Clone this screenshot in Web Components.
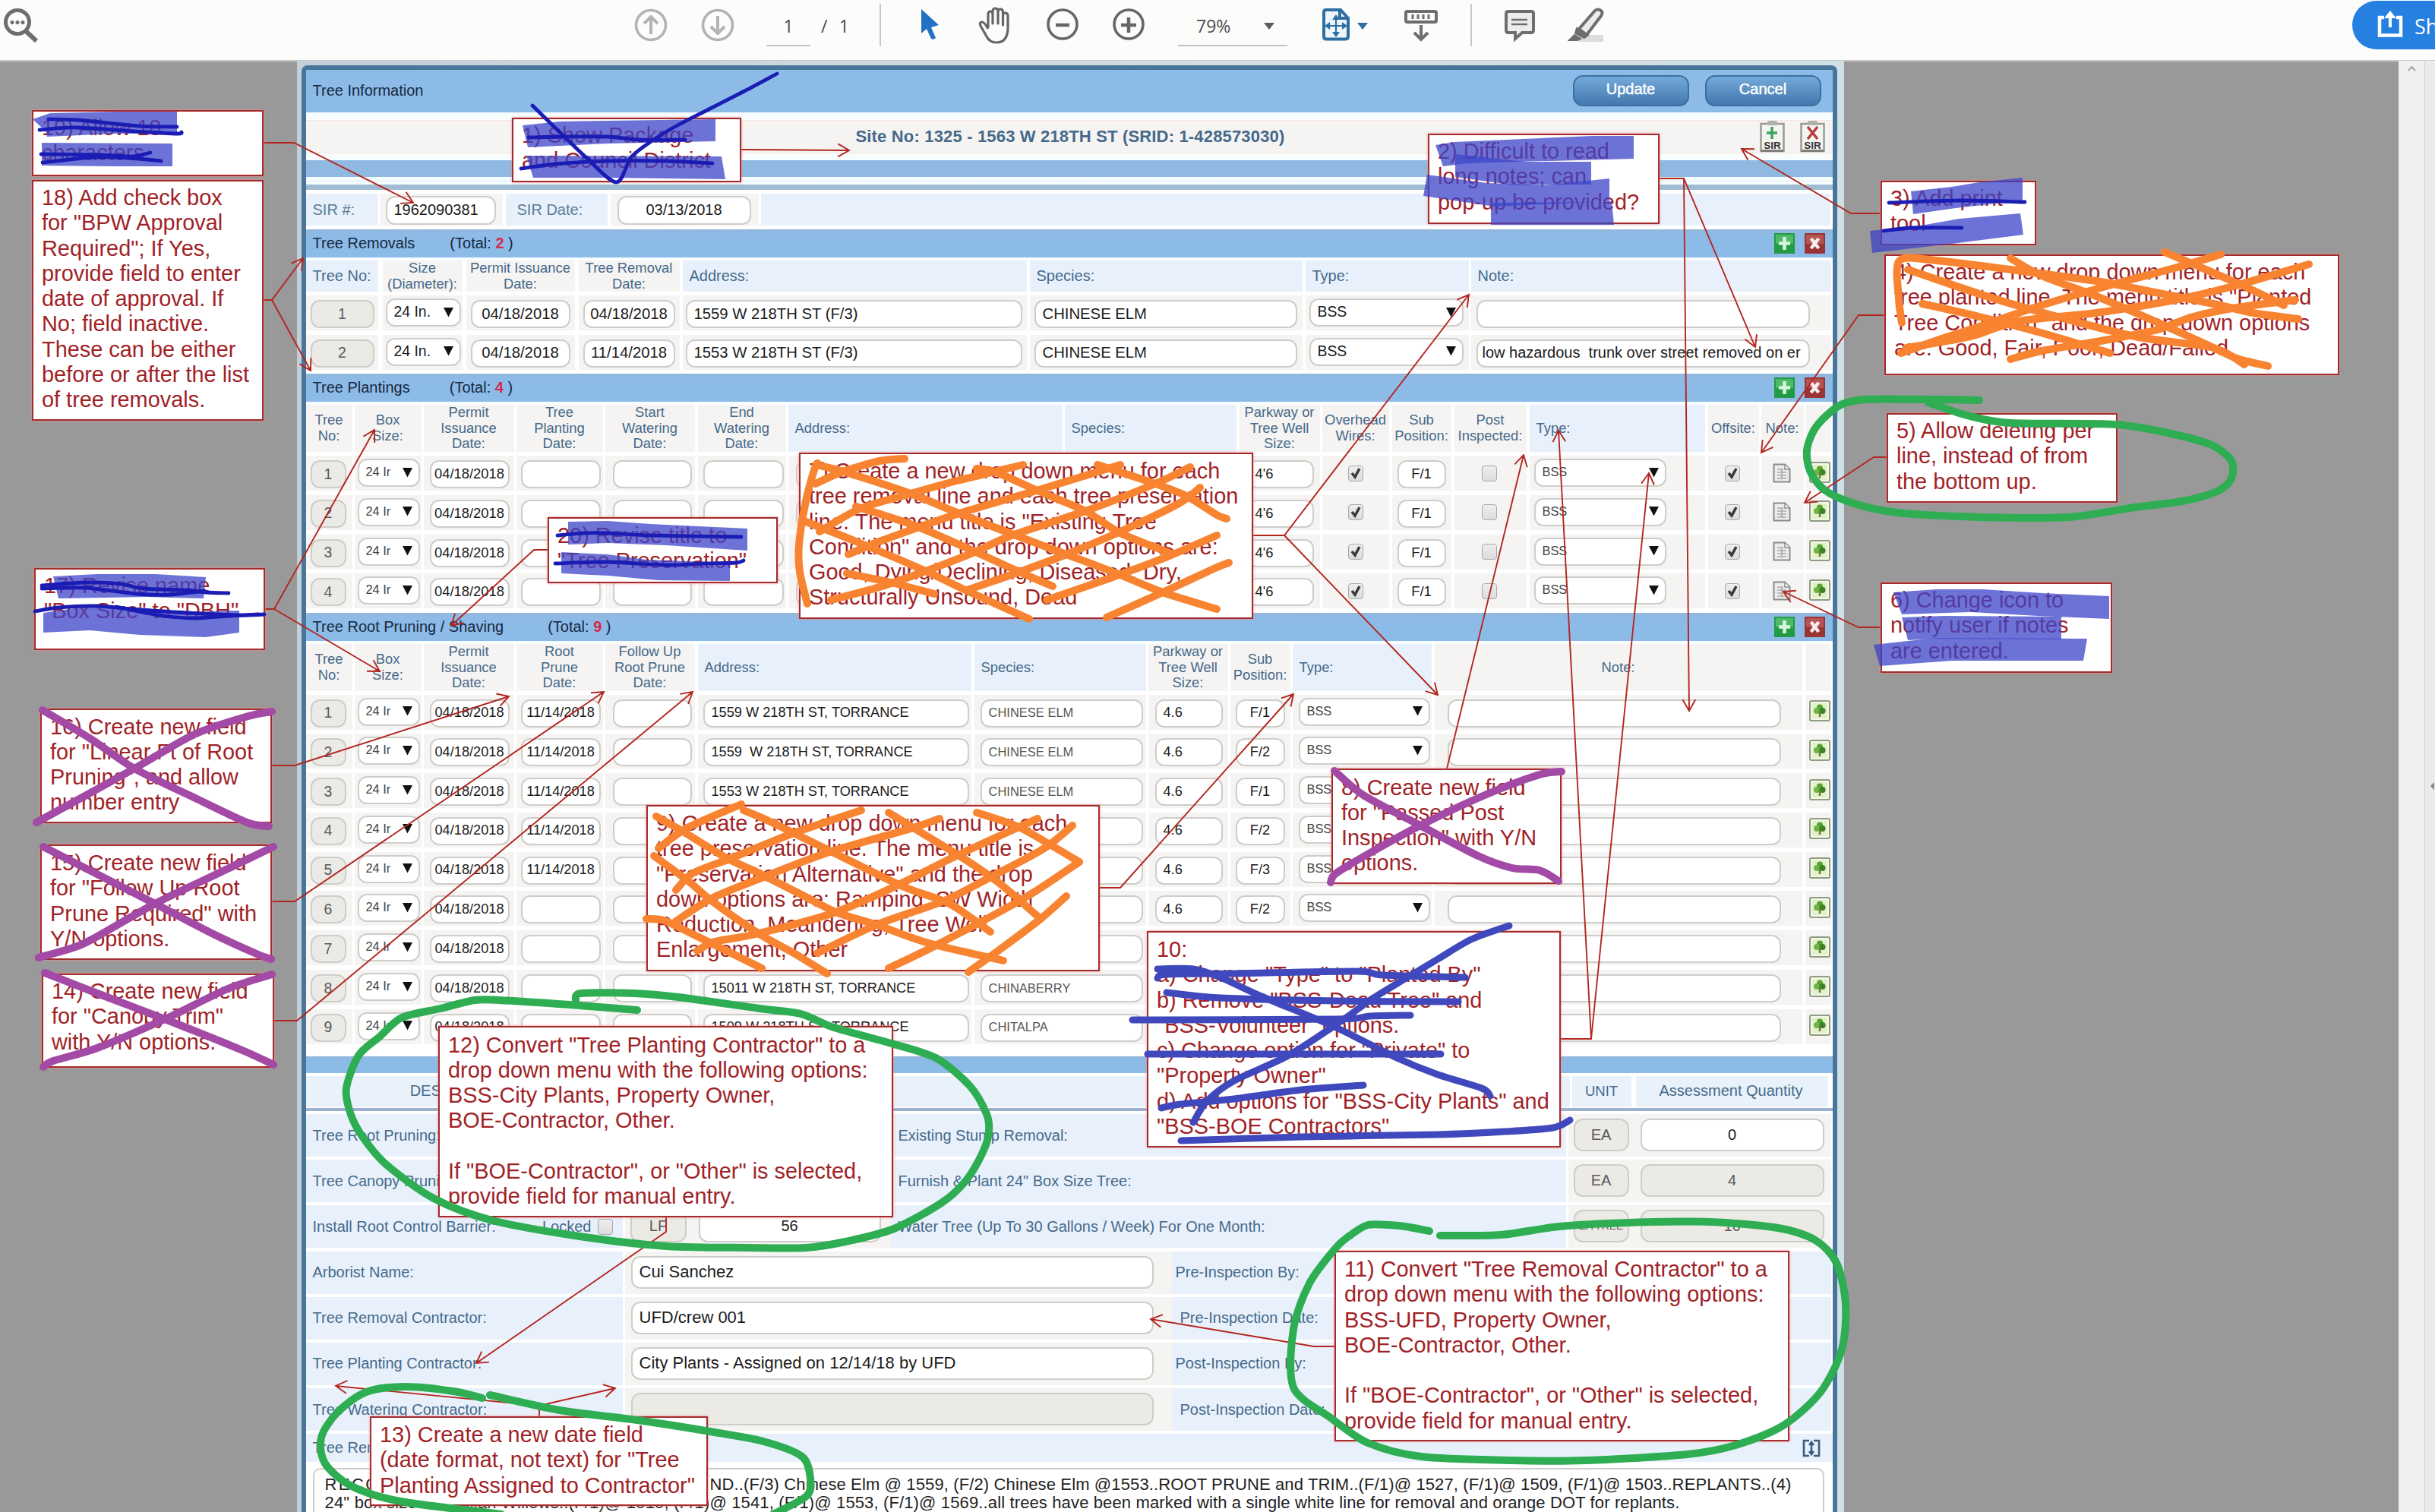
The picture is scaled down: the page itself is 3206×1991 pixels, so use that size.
<!DOCTYPE html>
<html lang="en">
<head>
<meta charset="utf-8">
<title>Tree Information - review</title>
<style>
html,body{margin:0;padding:0}
body{width:3206px;height:1991px;overflow:hidden;background:#999;font-family:"Liberation Sans",Arial,sans-serif}
</style>
</head>
<body>
<pdf-viewer></pdf-viewer>
<script>
const define=(name,cls)=>customElements.define(name,cls);
class Base extends HTMLElement{
  constructor(){super();this.attachShadow({mode:'open'});}
  connectedCallback(){this.shadowRoot.innerHTML=`<style>*{box-sizing:border-box}${this.css?this.css():''}</style>${this.html()}`;if(this.after)this.after();}
  a(n,d=''){return this.hasAttribute(n)?this.getAttribute(n):d;}
}

/* Text whose tracking is set so that it fills the width given in w */
define('fit-text',class extends Base{
  css(){return `:host{display:inline-block;white-space:pre}`}
  html(){return `<span>${this.a('t')}</span>`}
  after(){const s=this.shadowRoot.querySelector('span'),w=+this.a('w');
    const n=s.getBoundingClientRect().width;s.style.letterSpacing=((w-n)/s.textContent.length)+'px';}
});

/* Toolbar icons */
const ICONS={
search:[50,60,`<g fill="none" stroke="#6e6e6e" stroke-width="5"><circle cx="23" cy="29" r="15.5"/><path d="M34 41L48 54" stroke-width="6"/></g><g fill="#6e6e6e"><circle cx="16" cy="29.500" r="2.500"/><circle cx="23" cy="29.500" r="2.500"/><circle cx="30" cy="29.500" r="2.500"/></g>`],
up:[44,60,`<g fill="none" stroke="#b3b3b3" stroke-width="3.600"><circle cx="22" cy="33" r="19.500"/><path d="M22 45V23M13 31L22 22L31 31" stroke-width="4"/></g>`],
down:[44,60,`<g fill="none" stroke="#b3b3b3" stroke-width="3.600"><circle cx="22" cy="33" r="19.500"/><path d="M22 21V43M13 35L22 44L31 35" stroke-width="4"/></g>`],
cursor:[26,60,`<path d="M1 12V44L8 38L14 51Q17 53 20 50L14 36L24 33Z" fill="#2272c3"/>`],
hand:[46,60,`<path d="M13 36V19Q13 15 16 15Q19 15 19 19V31V15Q19 11 22.500 11Q26 11 26 15V31V16Q26 12 29 12Q32.500 12 32.500 16V33V21Q32.500 17 35.500 17Q39 17 39 21V36Q39 56 24 56Q15 56 11 48L3 34Q1 29 5 29Q8 29 13 38" fill="none" stroke="#666" stroke-width="3.200" stroke-linejoin="round"/>`],
minus:[44,60,`<g fill="none" stroke="#666"><circle cx="22" cy="32" r="19" stroke-width="3.600"/><path d="M13 33H31" stroke-width="4.500"/></g>`],
plus:[44,60,`<g fill="none" stroke="#666"><circle cx="22" cy="32" r="19" stroke-width="3.600"/><path d="M12 33H32M22 23V43" stroke-width="4.500"/></g>`],
caret:[16,60,`<path d="M1 30H15L8 39Z" fill="#5c5c5c"/>`],
caretb:[16,60,`<path d="M1 30H15L8 39Z" fill="#2d6ea3"/>`],
fit:[38,60,`<path d="M6 13H25L35 24V48Q35 51.500 31 51.500H6Q3 51.500 3 48V16Q3 13 6 13ZM24 13V24H35" fill="#eef5fa" stroke="#2d6ea3" stroke-width="4"/><path d="M19 22V46M7 34H31" stroke="#2d6ea3" stroke-width="2.200"/><path d="M19 19L14 26H24ZM19 49L14 42H24ZM4 34L11 29V39ZM34 34L27 29V39Z" fill="#2d6ea3"/>`],
ruler:[46,60,`<g fill="none" stroke="#6e6e6e" stroke-width="4"><rect x="3" y="15" width="40" height="14" rx="2"/><path d="M12 19V25M19 19V25M26 19V25M33 19V25" stroke-width="3"/><path d="M23 33V52M14 43L23 52L32 43"/></g>`],
comment:[42,60,`<path d="M6 15H36Q39 15 39 18V40Q39 43 36 43H24L15 51V43H6Q3 43 3 40V18Q3 15 6 15Z" fill="#ececec" stroke="#6e6e6e" stroke-width="4"/><path d="M10 26H31M10 32H31" stroke="#6e6e6e" stroke-width="2.600"/>`],
marker:[50,60,`<rect x="14" y="46" width="33" height="9" fill="#dcdcdc"/><path d="M15 38L36 14Q40 11 44 14Q47 17 44 21L25 46Z" fill="#ececec" stroke="#6e6e6e" stroke-width="4"/><path d="M12 37L27 46L22 50L10 44ZM9 46L17 51L13 53H2Z" fill="#6e6e6e" stroke="#6e6e6e" stroke-width="2"/>`],
share:[34,60,`<path d="M9 22H3V45.500H31V22H25" fill="none" stroke="#fff" stroke-width="4.500"/><path d="M17 35V20" stroke="#fff" stroke-width="4"/><path d="M17 13L9 23H25Z" fill="#fff"/>`]
};
define('tool-icon',class extends Base{
  css(){return `:host{display:block}svg{display:block}`}
  html(){const [w,h,p]=ICONS[this.a('name')];return `<svg width="${w}" height="${h}" viewBox="0 0 ${w} ${h}">${p}</svg>`}
});

define('viewer-toolbar',class extends Base{
  css(){return `:host{display:block;height:80.500px;background:#fcfcfb;border-bottom:2px solid #c9c9c9;font-family:"Open Sans","Noto Sans",sans-serif;font-size:23px;color:#4a4a4a;overflow:hidden}
  .bar{display:flex;align-items:flex-start;width:3206px;white-space:nowrap}
  .bar>*{flex:none}
  .num{height:61px;line-height:69px;border-bottom:2px solid #c4c4c4;text-align:center}
  .tx{height:61px;line-height:69px}
  .div{height:56px;margin-top:5px;width:1.500px;background:#c8c8c8}
  .share{height:64px;margin-top:1px;background:#2680e2;border-radius:34px 0 0 34px;display:flex;color:#fff;font-size:27px;line-height:68px;padding-left:33px;gap:15px}`}
  html(){
    const items=[[0,50,'search'],[835,879,'up'],[923,967,'down'],[1009,1067,'<div class="num" style="width:58px">1</div>'],[1081,1118,'<div class="tx" style="width:37px;display:flex;justify-content:space-between"><span>/</span><span>1</span></div>'],
    [1158,1159.5,'<div class="div"></div>'],[1212,1238,'cursor'],[1288,1334,'hand'],[1377,1421,'minus'],[1464,1508,'plus'],
    [1551,1663,'<div class="num" style="width:112px;padding-left:24px;text-align:left">79%</div>'],[1663,1679,'caretu'],[1695,1695,''],[1740,1778,'fit'],[1786,1802,'caretb'],[1848,1894,'ruler'],[1936,1937.5,'<div class="div"></div>'],[1980,2022,'comment'],[2064,2114,'marker'],
    [3097,3206,'<div class="share" style="width:109px"><tool-icon name="share"></tool-icon><span>Sh</span></div>']];
    let prev=0;
    return '<div class="bar">'+items.map(([a,b,c])=>{const ml=a-prev;prev=b;
      let inner=c;
      if(c==='caretu'){prev=1695;inner='<div style="height:61px;border-bottom:2px solid #c4c4c4;width:32px"><tool-icon name="caret"></tool-icon></div>';}
      else if(ICONS[c])inner=`<tool-icon name="${c}"></tool-icon>`;
      return `<div style="margin-left:${ml}px;width:${prev-a}px">${inner}</div>`}).join('')+'</div>';
  }
});

/* Small form icons */
define('form-icon',class extends Base{
  css(){return `:host{display:block}svg{display:block}`}
  html(){const k=this.a('kind');
    if(k==='add')return `<svg width="27" height="27"><rect width="27" height="27" fill="#239a45"/><rect x="2" y="2" width="23" height="12" fill="#4cba66"/><path d="M13.500 5V22M6 13.500H21" stroke="#d6f7dd" stroke-width="4.500"/></svg>`;
    if(k==='del')return `<svg width="27" height="27"><rect width="27" height="27" fill="#9a3434"/><rect x="2" y="2" width="23" height="12" fill="#b65353"/><path d="M8.500 7L18.500 20M18.500 7L8.500 20" stroke="#f6eded" stroke-width="4.500"/></svg>`;
    if(k==='tree')return `<svg width="28" height="28"><rect x="1" y="1" width="26" height="26" rx="2" fill="#f3f8e8" stroke="#8f9d84" stroke-width="2"/><rect x="4" y="4" width="20" height="20" fill="#e3f1c8"/><circle cx="14" cy="9.500" r="4" fill="#57a332"/><circle cx="10" cy="14" r="4" fill="#6db548"/><circle cx="17.500" cy="14" r="4" fill="#3b8220"/><path d="M14 14V22" stroke="#6b7a3a" stroke-width="2.500"/></svg>`;
    if(k==='note')return `<svg width="24" height="26"><path d="M1.500 1.500H16L22.500 8V24.500H1.500Z" fill="#ececec" stroke="#8b8b8b" stroke-width="2"/><path d="M16 2V8H22" fill="#fff" stroke="#8b8b8b" stroke-width="1.500"/><path d="M6 8H14M6 12H18M6 16H18M6 20H18M12 8V21" stroke="#a9a9a9" stroke-width="1.600"/></svg>`;
    if(k==='expand')return `<svg width="24" height="24"><path d="M9 2H2V22H9M15 2H22V22H15M12 5V19M9 8L12 4L15 8M9 16L12 20L15 16" fill="none" stroke="#375d80" stroke-width="2.600"/></svg>`;
    if(k==='sirx'||k==='sir'){const m=k==='sir'?'<path d="M16 8V24M9 16H23" stroke="#3fa65e" stroke-width="3.500"/>':'<path d="M10 8L23 24M23 8L10 24" stroke="#b83a3a" stroke-width="3.500"/>';
      return `<svg width="33" height="42"><rect x="1.500" y="4" width="30" height="36" fill="#f4f4f0" stroke="#9b9b95" stroke-width="2.500"/><rect x="10" y="0" width="13" height="6" rx="2" fill="#aeb0ab"/>${m}<path d="M2 39.500H31" stroke="#77776f" stroke-width="2.500"/><text x="16.500" y="37" font-family="Liberation Sans" font-weight="bold" font-size="13.500" text-anchor="middle" fill="#333">SIR</text></svg>`}
    return '';}
});

define('check-box',class extends Base{
  css(){return `:host{display:block;width:20px;height:21px;border:1.500px solid #a9a9a9;border-radius:4px;background:linear-gradient(#eee,#dcdcdc)}svg{display:block}`}
  html(){return this.hasAttribute('on')?`<svg width="17" height="18"><path d="M4 9L8 14L14 3" fill="none" stroke="#3a3a3a" stroke-width="3.600"/></svg>`:''}
});

/* Rounded input, read-only box or select */
define('form-field',class extends Base{
  css(){const k=this.a('kind');return `:host{display:flex;align-items:center;height:37px;border:2px solid #cfcdc9;border-radius:12px;background:${k==='ro'?'#ebeae5':'#fff'};white-space:pre;overflow:hidden;color:${k==='ro'?'#5a5a5a':'#1b1b1b'};justify-content:${k==='ro'||k==='date'?'center':'flex-start'};padding:${k==='sel'?'0 8px 2px 9px':k==='ro'||k==='date'?'0 0 1px':'0 0 1px '+this.a('pad','9')+'px'}}
  .t{flex:${k==='sel'?'1':'none'}}svg{flex:none}`}
  html(){return `<span class="t">${this.a('t')}</span>${this.a('kind')==='sel'?'<svg width="13" height="14"><path d="M0 1H13L6.500 13.500Z" fill="#111"/></svg>':''}`}
});

/* Blue section caption */
define('section-band',class extends Base{
  css(){return `:host{display:flex;flex:none;align-items:center;background:linear-gradient(#93b7db,#8dbbe7 20%);padding:0 10px 0 9px;color:#16283f;font-size:20px;white-space:pre}
  b{color:#d8264a}.sp{flex:1}.ic{display:flex;gap:13px}`}
  html(){const t=this.a('t');return `<span>${t}</span>${this.a('total')?`<span style="margin-left:${this.a('gap')}px">(Total: <b>${this.a('total')}</b> )</span>`:''}<span class="sp"></span>${this.hasAttribute('icons')?'<span class="ic"><form-icon kind="add"></form-icon><form-icon kind="del"></form-icon></span>':''}`}
});

/* Data grid: columns are [cell start, cell end, field start, field end] */
const TABLES={
removals:{hh:41,top:5,font:20.3,cols:[
 [403,498,409,493,'Tree No:','ro','l20'],[504,609,508,607,'Size<br>(Diameter):','sel','c'],[614,757,620,751,'Permit Issuance<br>Date:','date','c'],[762,895,768,889,'Tree Removal<br>Date:','date','c'],[899,1352,903,1346,'Address:','in','l20'],[1356,1715,1362,1708,'Species:','in','l20'],[1719,1934,1724,1927,'Type:','sel','l20'],[1937,2411,1944,2383,'Note:','in','l20']],
 rows:[['1','24 In.','04/18/2018','04/18/2018','1559 W 218TH ST (F/3)','CHINESE ELM','BSS',''],['2','24 In.','04/18/2018','11/14/2018','1553 W 218TH ST (F/3)','CHINESE ELM','BSS','low hazardous  trunk over street removed on er']]},
plantings:{hh:62,top:5,font:18.4,cols:[
 [403,464,409,456,'Tree<br>No:','ro','c'],[467,555,471,553,'Box<br>Size:','sel','c'],[558,677,566,671,'Permit<br>Issuance<br>Date:','date','c'],[680,794,686,791,'Tree<br>Planting<br>Date:','date','c'],[797,915,807,911,'Start<br>Watering<br>Date:','date','c'],[919,1035,926,1032,'End<br>Watering<br>Date:','date','c'],[1038,1399,1048,1392,'Address:','in','l'],[1402,1628,1412,1622,'Species:','in','l'],[1632,1738,1642,1730,'Parkway or<br>Tree Well<br>Size:','in','c'],[1741,1829,1775,1795,'Overhead<br>Wires:','on','c'],[1833,1911,1840,1904,'Sub<br>Position:','date','c'],[1915,2010,1951,1971,'Post<br>Inspected:','off','c'],[2014,2245,2020,2194,'Type:','sel','l'],[2249,2316,2271,2291,'Offsite:','on','c'],[2319,2375,2334,2358,'Note:','note','c'],[2378,2411,2382,2410,'','tree','c']],
 rows:['1','2','3','4'].map(n=>[n,'24 Ir','04/18/2018','','','','','',"4'6",'','F/1','','BSS','','',''])},
pruning:{hh:62,top:4.5,font:18.2,cols:[
 [403,464,409,456,'Tree<br>No:','ro','c'],[467,555,471,553,'Box<br>Size:','sel','c'],[558,677,566,671,'Permit<br>Issuance<br>Date:','date','c'],[680,794,686,791,'Root<br>Prune<br>Date:','date','c'],[797,915,807,911,'Follow Up<br>Root Prune<br>Date:','date','c'],[919,1279,926,1276,'Address:','in','l'],[1283,1509,1291,1505,'Species:','sp','l'],[1512,1617,1521,1610,'Parkway or<br>Tree Well<br>Size:','in','c'],[1620,1699,1627,1692,'Sub<br>Position:','date','c'],[1702,1885,1710,1883,'Type:','sel','l'],[1889,2373,1906,2345,'Note:','in','c'],[2377,2411,2382,2410,'','tree','c']],
 rows:[['1','11/14/2018','1559 W 218TH ST, TORRANCE','CHINESE ELM','F/1'],['2','11/14/2018','1559  W 218TH ST, TORRANCE','CHINESE ELM','F/2'],['3','11/14/2018','1553 W 218TH ST, TORRANCE','CHINESE ELM','F/1'],['4','11/14/2018','','','F/2'],['5','11/14/2018','','','F/3'],['6','','','','F/2'],['7','','','',''],['8','','15011 W 218TH ST, TORRANCE','CHINABERRY',''],['9','','1509 W 218TH ST, TORRANCE','CHITALPA','']].map(([n,d,a,s,p])=>[n,'24 Ir','04/18/2018',d,'',a,s,p?'4.6':'',p,p?'BSS':'','',''])}
};
define('tree-table',class extends Base{
  css(){return `:host{display:block;flex:none;background:linear-gradient(#f3fcff,#fff 6px,#fff)}
  .row{display:flex;height:46px;margin-bottom:5.800px}.row>*,.head>*{flex:none}
  .head{display:flex;padding-top:4px}
  .h{background:#e8f1fb;color:#45698a;font-size:18.400px;line-height:20.700px;display:flex;align-items:center;justify-content:center;text-align:center;white-space:nowrap}
  .h.l,.h.l20{justify-content:flex-start;text-align:left;padding-left:9px}.h.l20{font-size:20px}
  .c{background:#f5f4f2}`}
  html(){const T=TABLES[this.a('name')];const g=(i)=>T.cols[i][0]-(i?T.cols[i-1][1]:403);
    const small=T.font<20;
    const head=`<div class="head" style="height:${T.hh+4}px">`+T.cols.map((c,i)=>`<div class="h ${c[6]}" style="margin-left:${g(i)}px;width:${c[1]-c[0]}px">${c[4]?`<span>${c[4]}</span>`:''}</div>`).join('')+'</div>';
    const rows=T.rows.map(r=>'<div class="row">'+r.map((v,i)=>{const c=T.cols[i],k=c[5],w=c[3]-c[2];let el;
      const y=k==='sel'?4:6;
      if(k==='on'||k==='off')el=`<check-box ${k==='on'?'on':''} style="margin-top:12.500px"></check-box>`;
      else if(k==='note'||k==='tree')el=`<form-icon kind="${k}" style="margin-top:${k==='note'?9.5:7.5}px"></form-icon>`;
      else{let fs=T.font,st='';if(k==='ro')fs=19.5;if(k==='sel'){fs=small?16.4:19.4;if(small)st='color:#444;'}if(k==='sp'){fs=16.5;st='color:#555;'}
        const note=v.startsWith('low ');if(note)fs=20;
        el=`<form-field kind="${k==='sp'?'in':k}" ${note?'pad="6"':''} t="${v}" style="margin-top:${y}px;width:${w}px;font-size:${fs}px;${st}"></form-field>`}
      return `<div class="c" style="margin-left:${g(i)}px;width:${c[1]-c[0]}px;padding-left:${c[2]-c[0]}px">${el}</div>`}).join('')+'</div>').join('');
    return head+`<div style="height:${T.top}px"></div>`+rows;}
});

/* Lower part: quantities, contractors, remarks */
define('detail-table',class extends Base{
  css(){return `:host{display:block;flex:none;background:#fff;font-size:20px;color:#45698a}
  .r{display:flex;height:56px;margin-bottom:4.200px}.r>*{flex:none}
  .l{background:#e8f1fb;display:flex;align-items:center;padding-left:9px;white-space:nowrap}
  .f{background:#f5f4f2;display:flex;align-items:flex-start;padding-top:6px}
  .head{display:flex;height:41px;margin-top:4px}.head>div{background:#e9f2fa;display:flex;align-items:center;justify-content:center;flex:none;padding-bottom:2px}
  form-field{flex:none}.line{height:4px;background:#9cb0cf;margin:1px 0 4px}
  .rem{display:flex;height:37px;background:#e8f1fb;align-items:center;padding:0 16px 0 9px;margin-bottom:8px}
  .ta{margin-left:9px;width:1990px;height:60px;border:2px solid #cfcdc9;border-radius:10px 10px 0 0;background:#fff;color:#222;font-size:22px;line-height:24px;padding:7.500px 0 0 14px;white-space:pre}
  .ln{display:flex;height:24.500px}.ln>*{flex:none}`}
  html(){
    const F=(x,w,k,t,fs=20,h=43)=>`<form-field kind="${k}" t="${t}" style="margin-left:${x}px;width:${w}px;height:${h}px;font-size:${fs}px"></form-field>`;
    const qty=(label,extra,u1,q1,label2,u2,q2,qk,us=20)=>`<div class="r"><div class="l" style="width:417px"><span style="flex:1">${label}</span>${extra}</div><div class="f" style="width:350px;margin-left:3px">${F(7,74,'ro',u1)}${F(16,240,'date',q1)}</div>
      <div class="l" style="width:889px;padding-left:10px">${label2}</div><div class="f" style="width:346px;margin-left:3px">${F(7,73,'ro',u2,us)}${F(15,242,qk,q2)}</div></div>`;
    const who=(label,val,k,l2,pad)=>`<div class="r"><div class="l" style="width:417px">${label}</div><div class="f" style="width:720px;margin-left:3px">${F(8,688,k,val,22)}</div><div class="l" style="width:868px;padding-left:${pad}px">${l2}</div></div>`;
    return `<div class="head"><div style="width:417px;padding-right:6px">DESCRIPTION</div><div style="width:1244px;margin-left:3px"></div><div style="width:78px;margin-left:3px;font-size:18.500px">UNIT</div><div style="width:253px;margin-left:6px;padding-right:2px">Assessment Quantity</div></div><div class="line"></div>`
    +qty('Tree Root Pruning:','','','','Existing Stump Removal:','EA','0','date')
    +qty('Tree Canopy Pruning:','','','','Furnish &amp; Plant 24" Box Size Tree:','EA','4','ro')
    +qty('Install Root Control Barrier:','<span style="margin-right:8px">Locked</span><check-box style="margin-right:13px"></check-box>','LF','56','Water Tree (Up To 30 Gallons / Week) For One Month:','EA TREE','16','ro',14)
    +who('Arborist Name:','Cui Sanchez','in','Pre-Inspection By:',5)
    +who('Tree Removal Contractor:','UFD/crew 001','in','Pre-Inspection Date:',11)
    +who('Tree Planting Contractor:','City Plants - Assigned on 12/14/18 by UFD','in','Post-Inspection By:',5)
    +who('Tree Watering Contractor:','','ro','Post-Inspection Date:',11)
    +`<div class="rem"><span style="flex:1">Tree Remarks:</span><form-icon kind="expand"></form-icon></div>
    <div class="ta"><div class="ln"><fit-text w="507" t="RECOMMENDATIONS..REMOVE AND GRI"></fit-text><fit-text w="1424" t="ND..(F/3) Chinese Elm @ 1559, (F/2) Chinese Elm @1553..ROOT PRUNE and TRIM..(F/1)@ 1527, (F/1)@ 1509, (F/1)@ 1503..REPLANTS..(4)"></fit-text></div><div class="ln"><fit-text w="507" t="24&quot; box size Australian Willows..(F/1)@ 1515, (F/1)"></fit-text><fit-text w="1277" t="@ 1541, (F/1)@ 1553, (F/1)@ 1569..all trees have been marked with a single white line for removal and orange DOT for replants."></fit-text></div></div>`;
  }
});

define('tree-form',class extends Base{
  css(){return `:host{display:block;width:2037px;height:1911px;background:linear-gradient(90deg,#c3d0da,#d3dde2 60%,#cfe0e6);padding:6px 9px 0 5.500px;overflow:hidden}
  .panel{border:6px solid #487599;border-bottom:0;border-radius:8px 8px 0 0;width:2022px;height:1905px;background:#fff;display:flex;flex-direction:column;overflow:hidden}
  .panel>*{flex:none}
  .title{height:56px;background:#8dbbe7;display:flex;align-items:center;padding:0 15px 2px 9px;font-size:20px;color:#16283f}
  .title span{flex:1}.btn{width:153px;height:41px;border-radius:13px;border:2px solid #3b6fa3;background:linear-gradient(#75a9da,#4478ae);color:#fff;font-size:20px;-webkit-text-stroke:.5px #fff;display:flex;align-items:center;justify-content:center;padding-bottom:4px;margin-left:21px}
  .site{height:63px;padding:10px 0 9px;background:#f7fdff}
  .site>div{background:#f5f4f2;border:1.500px solid #f8e6e0;border-width:1.500px 0;height:44px;display:flex;align-items:center;padding:0 10px 0 724px}
  .site b{flex:1;font-size:22px;color:#45698a}
  .sir{height:52px;padding-top:5px;display:flex}
  .sir .l{height:42px;background:#e8f1fb;color:#5a7c98;font-size:20px;display:flex;align-items:center;padding-left:9px}
  .sir .f{background:#f5f4f2;height:42px;padding:2.500px 0 0 8px}`}
  html(){return `<div class="panel"><div class="title"><span>Tree Information</span><div class="btn">Update</div><div class="btn">Cancel</div></div>
  <div class="site"><div><b><fit-text w="565" t="Site No: 1325 - 1563 W 218TH ST (SRID: 1-428573030)"></fit-text></b><form-icon kind="sir"></form-icon><form-icon kind="sirx" style="margin-left:20px"></form-icon></div></div>
  <div style="height:22px;background:#8fb9e1"></div><div style="height:10px;background:linear-gradient(#f3fcff 4px,#e6eef2 5px,#f3fcff 6px)"></div><div style="height:7px;background:#9fbcd2"></div>
  <div class="sir"><div class="l" style="width:95px">SIR #:</div><div class="f" style="width:162px;margin-left:2px"><form-field kind="in" t="1962090381" style="width:145px;height:38px;font-size:20px"></form-field></div><div class="l" style="width:134px;padding-left:15px;margin-left:4px">SIR Date:</div><div class="f" style="width:195px;margin-left:4px;padding-left:9px"><form-field kind="date" t="03/13/2018" style="width:176px;height:38px;font-size:20px"></form-field></div><div class="l" style="width:1408px;margin-left:3px"></div></div>
  <section-band t="Tree Removals" total="2" gap="46" icons style="height:37px"></section-band>
  <tree-table name="removals" style="height:153px"></tree-table>
  <section-band t="Tree Plantings" total="4" gap="52" icons style="height:37px"></section-band>
  <tree-table name="plantings" style="height:278px"></tree-table>
  <section-band t="Tree Root Pruning / Shaving" total="9" gap="58" icons style="height:37px"></section-band>
  <tree-table name="pruning" style="height:547px"></tree-table>
  <section-band t="" style="height:22px"></section-band>
  <detail-table style="height:580px"></detail-table></div>`}
});

/* Red callout */
define('review-note',class extends Base{
  css(){return `:host{position:absolute;box-sizing:border-box;border:2.500px solid #a52c2c;background:#fff;box-shadow:0 0 3px #e88;color:#a02226;font-size:28.900px;line-height:33.250px;padding:${this.a('top','5')}px 0 0 11px;white-space:pre}`}
  html(){return this.a('t').replace(/\n/g,'<br>')}
});
const NOTES=[
[674,155,976,240,'1) Show Package\nand Council District'],[1880,176,2185,295,'2) Difficult to read\nlong notes; can\npop-up be provided?'],[2476,238,2681,323,'3) Add print\ntool'],
[2481,335,3080,494,'4) Create a new drop down menu for each\ntree planted line. The menu title is "Planted\nTree Condition" and the drop down options\nare: Good, Fair, Poor, Dead/Failed'],
[2484,544,2788,662,'5) Allow deleting per\nline, instead of from\nthe bottom up.'],[2476,767,2781,886,'6) Change icon to\nnotify user if notes\nare entered.'],
[1052,596,1650,815,'7) Create a new drop down menu for each\ntree removal line and each tree preservation\nline. The menu title is "Existing Tree\nCondition" and the drop down options are:\nGood, Dying/Declining, Diseased, Dry,\nStructurally Unsound, Dead',6],
[1753,1012,2056,1164,'8) Create new field\nfor "Passed Post\nInspection" with Y/N\noptions.',6.5],
[851,1060,1448,1279,'9) Create a new drop down menu for each\ntree preservation line. The menu title is\n"Preservation Alternative" and the drop\ndown options are: Ramping, SW Width\nReduction, Meandering, Tree Well\nEnlargement, Other',6],
[1510,1226,2055,1511,'10:\na) Change "Type" to "Planted By"\nb) Remove "BSS-Dead Tree" and\n"BSS-Volunteer" options.\nc) Change option for "Private" to\n"Property Owner"\nd) Add options for "BSS-City Plants" and\n"BSS-BOE Contractors"',6],
[1757,1647,2356,1898,'11) Convert "Tree Removal Contractor" to a\ndrop down menu with the following options:\nBSS-UFD, Property Owner,\nBOE-Contractor, Other.\n\nIf "BOE-Contractor", or "Other" is selected,\nprovide field for manual entry.',6],
[577,1351,1176,1603,'12) Convert "Tree Planting Contractor" to a\ndrop down menu with the following options:\nBSS-City Plants, Property Owner,\nBOE-Contractor, Other.\n\nIf "BOE-Contractor", or "Other" is selected,\nprovide field for manual entry.',6.5],
[487,1865,932,1983,'13) Create a new date field\n(date format, not text) for "Tree\nPlanting Assigned to Contractor"',6],
[55,1282,361,1406,'14) Create new field\nfor "Canopy Trim"\nwith Y/N options.'],[53,1112,358,1264,'15) Create new field\nfor "Follow Up Root\nPrune Required" with\nY/N options.',6],
[53,933,358,1084,'16) Create new field\nfor "Linear Ft of Root\nPruning", and allow\nnumber entry',5.5],[45,748,349,856,'17) Revise name\n"Box Size" to "DBH"'],
[42,237,347,554,'18) Add check box\nfor "BPW Approval\nRequired"; If Yes,\nprovide field to enter\ndate of approval. If\nNo; field inactive.\nThese can be either\nbefore or after the list\nof tree removals.'],[42,145,347,232,'19) Allow 18\ncharacters'],
[721,681,1024,768,'20) Revise title to\n"Tree Preservation"',5.5]];
const ARROWS=['347 188 387 188 544 267','347 395 358 395 399 340','358 395 409 488','976 197 1118 198','2185 235 2217 235 2311 457','2217 235 2224 936','2476 281 2437 281 2293 196','2481 415 2447 415 2319 596','2484 602 2467 602 2376 662','2476 826 2447 826 2348 779','1650 705 1691 705 1934 388','1691 705 1893 915','1905 1012 2006 599','1448 1169 1475 1169 1703 914','2055 1368 2095 1368 2052 567','2095 1368 2171 623','1757 1773 1730 1773 1515 1737','877 1603 877 1622 627 1795','710 1865 710 1851 442 1825','710 1851 810 1828','361 1344 391 1344 912 911','358 1187 388 1187 795 911','358 1008 388 1008 670 917','349 802 361 802 493 566','361 802 500 884','721 724 703 724 594 824'];
const MARKS=['43 157 66 149 153 147 233 147 233 176 153 176 62 180 60 173','55 188 227 189 227 219 147 219 55 218',
'688 165 737 160 800 159 942 157 942 186 800 189 695 194','693 205 950 206 955 236 800 234 702 234',
'1890 191 1915 187 2096 179 2151 179 2151 209 1999 213 1932 215 1900 219','1916 203 2009 213 2095 213 2095 243 1994 244 1916 233','1879 230 1958 241 2035 244 2119 235 2119 265 1968 272 1874 258','1963 267 2086 266 2122 265 2125 296 1963 296',
'2516 252 2570 246 2606 240 2663 234 2663 264 2575 274 2519 282','2462 304 2529 297 2580 288 2660 281 2664 309 2570 321 2465 333',
'2493 780 2549 776 2611 776 2688 781 2777 785 2777 815 2683 811 2595 806 2504 809','2504 813 2559 811 2714 812 2714 842 2544 841 2512 843','2467 849 2549 840 2748 841 2743 870 2570 870 2475 877',
'70 759 128 756 205 756 271 760 268 788 194 786 77 788','57 807 118 798 205 807 315 804 315 833 271 839 184 836 118 830 57 833',
'748 687 800 686 856 690 984 696 984 725 877 718 800 715 748 717','739 727 800 730 851 737 961 741 961 765 866 764 800 758 739 755'];
const INK=[
['#1a1cb4',4.8,['64 157 102 158 184 166 233 167','52 171 102 168 194 174 235 176 239 174','54 203 133 204 174 206 198 201','56 214 123 207 169 208 212 212','696 181 742 180 800 180 841 184 902 184','686 222 731 216 800 212 877 212 938 215','701 139 767 203 811 240 831 207 856 187 892 165 933 144 980 120 1023 97','2487 267 2580 264 2666 266','2480 304 2518 300 2583 300','55 771 113 767 159 769 189 775 246 777 271 780 301 781','55 775 113 774 179 782 225 783 269 778','46 805 77 800 128 798 174 802 246 807 317 810 348 809','153 799 215 811 256 814 286 812 340 809','734 705 770 702 800 702 861 705 976 707','731 742 800 740 877 744 928 742 969 741 979 738']],
['#4048bd',9,['1524 1288 1536 1283 1625 1282 1786 1279 1821 1284 1929 1287','1524 1276 1571 1276 1607 1287 1661 1312 1759 1353 1839 1393 1893 1415 1951 1433 1962 1443','1987 1219 1937 1237 1893 1263 1848 1290 1804 1317 1768 1343 1696 1390 1625 1423 1589 1450 1571 1478','1536 1307 1607 1314 1759 1318 1920 1319','1491 1343 1759 1342 1804 1338 1857 1337','1511 1388 1897 1388','1529 1459 1554 1454 1625 1447 1714 1435 1795 1429','1555 1502 1714 1497 1893 1494 1982 1490 2045 1485 2067 1475']],
['#a24aa5',10,['56 935 118 972 177 1012 255 1050 325 1083 354 1088','358 937 327 943 256 967 177 1012 48 1083','57 1115 204 1190 281 1230 340 1257 357 1263','360 1115 281 1153 204 1190 121 1237 96 1248 51 1261','59 1281 128 1308 217 1342 319 1383 360 1402','358 1283 300 1302 217 1342 128 1380 70 1397 57 1405','1757 1015 1795 1047 1870 1087 1946 1127 1991 1143 2027 1146 2052 1160','2056 1016 2027 1020 1955 1047 1870 1087 1804 1123 1759 1150 1752 1162']],
['#f88330',10,['2504 425 2500 393 2501 343 2549 343 2647 355 2760 370 2827 383 2914 400 2966 412 3026 420','2512 355 2606 387 2683 410 2811 443 2914 458 2955 480','2647 340 2688 363 2760 390 2837 423 2904 453 2945 472 2986 482','2924 335 2863 353 2780 375 2688 402 2606 430 2554 447 2503 465','3040 348 2940 377 2863 395 2760 412 2657 423 2595 443 2510 458','2850 332 2888 348 2955 377 3007 402','3022 395 2945 405 2888 417 2837 435 2760 450 2688 462 2647 473','2531 400 2606 417 2683 437 2778 465',
'1191 604 1158 607 1107 622 1074 637','1079 613 1074 613 1061 660 1052 717 1053 753 1063 795','1079 613 1117 623 1199 650 1260 675 1332 703 1404 730 1470 755 1531 780 1602 802','1347 612 1260 633 1199 650 1132 670 1079 700','1475 612 1368 645 1260 677 1158 713 1117 730','1567 615 1521 637 1429 673 1332 705 1281 728 1219 752 1158 773 1094 790','1580 642 1552 663 1475 700 1404 730 1337 755 1273 777','1602 705 1537 733 1465 760 1378 790','1618 741 1600 748 1531 780 1457 813','1286 617 1312 622 1368 647 1429 673 1475 702 1540 728','1445 612 1521 637 1562 653 1602 678 1615 683','1127 667 1204 692 1276 723 1342 753 1386 772','1056 685 1127 713 1219 752 1271 777 1355 815','1115 755 1173 767 1230 782',
'864 1075 896 1093 957 1130 1000 1150 1053 1177 1103 1202 1152 1217 1223 1242 1321 1265','976 1059 905 1090 867 1117','979 1067 1010 1080 1045 1097 1098 1123 1188 1167 1250 1190 1304 1227','1170 1070 1214 1097 1268 1130 1312 1160 1344 1187 1370 1210','1286 1070 1339 1088 1384 1113 1421 1135','890 1172 912 1150 963 1130 1045 1097 1134 1067','890 1213 937 1183 1000 1157 1089 1123 1196 1092 1237 1078','918 1252 941 1240 995 1230 1098 1202 1179 1167 1259 1127 1366 1078','1076 1255 1156 1217 1241 1187 1308 1153 1375 1117 1412 1087','1170 1275 1232 1245 1348 1183 1421 1135','1275 1280 1321 1247 1370 1210 1404 1180','861 1127 906 1160 938 1187 1000 1230 1045 1255 1089 1282','851 1210 874 1212 912 1230 1003 1275']],
['#2ead53',10,['2606 527 2539 526 2457 526 2426 532 2405 547 2388 567 2379 593 2383 620 2402 645 2441 663 2498 675 2606 681 2724 681 2811 668 2873 660 2919 647 2938 630 2938 607 2914 587 2863 572 2786 559 2647 557 2590 547 2539 530',
'839 1330 750 1323 657 1317 625 1317 580 1328 529 1340 500 1365 472 1390 456 1433 461 1465 476 1495 508 1533 571 1578 648 1607 763 1628 877 1641 986 1643 1062 1643 1113 1635 1177 1618 1241 1583 1273 1553 1295 1515 1302 1490 1299 1467 1277 1430 1232 1393 1170 1373 1098 1353 1054 1335 1000 1328 893 1313 835 1308 765 1308 758 1318',
'1882 1621 1850 1615 1829 1613 1801 1613 1780 1625 1759 1643 1724 1690 1703 1750 1703 1827 1752 1867 1801 1900 1871 1918 1990 1923 2089 1923 2222 1915 2285 1903 2348 1877 2397 1833 2425 1777 2430 1717 2418 1663 2390 1633 2341 1617 2250 1609 2145 1610 2053 1615 1976 1626 1896 1627',
'635 1841 597 1832 533 1826 482 1833 444 1860 423 1893 428 1927 463 1957 527 1977 660 1994','645 1837 737 1857 839 1870 935 1885 1005 1898 1056 1918 1067 1947 1062 1970 1018 1994']]];
const pairs=s=>{const n=s.split(' ').map(Number),o=[];for(let i=0;i<n.length;i+=2)o.push([n[i],n[i+1]]);return o;};
/* Smooth curve through the pen points */
const curve=s=>{const p=pairs(s);if(p.length<3)return 'M'+p.join('L');let d=`M${p[0]}`;for(let i=0;i<p.length-1;i++){const a=p[i-1]||p[i],b=p[i],c=p[i+1],e=p[i+2]||c;d+=`C${b[0]+(c[0]-a[0])/7} ${b[1]+(c[1]-a[1])/7} ${c[0]-(e[0]-b[0])/7} ${c[1]-(e[1]-b[1])/7} ${c}`}return d;};
define('ink-layer',class extends Base{
  css(){return `:host{position:absolute;left:0;top:0;width:3206px;height:1991px;pointer-events:none}svg{display:block}`}
  html(){let g='';
    if(this.a('kind')==='arrows'){
      g='<g fill="none" stroke="#b3261f" stroke-width="1.900">'+ARROWS.map(s=>{const p=pairs(s),e=p[p.length-1],b=p[p.length-2],t=Math.atan2(e[1]-b[1],e[0]-b[0]);
        const h=k=>[e[0]-17*Math.cos(t+k),e[1]-17*Math.sin(t+k)].map(v=>v.toFixed(1));
        return `<path d="M${p.join('L')}M${h(.52)}L${e}L${h(-.52)}"/>`}).join('')+'</g>';
    }else{
      g=MARKS.map(m=>`<polygon points="${m}" fill="rgba(60,68,200,.75)"/>`).join('')+INK.map(([c,w,l])=>`<g fill="none" stroke="${c}" stroke-width="${w}" stroke-linecap="round" stroke-linejoin="round">${l.map(s=>`<path d="${curve(s)}"/>`).join('')}</g>`).join('');
    }
    return `<svg width="3206" height="1991" viewBox="0 0 3206 1991">${g}</svg>`}
});

define('scroll-rail',class extends Base{
  css(){return `:host{display:flex;width:48px;background:#f0f0f0;flex:none}.t{width:35px;border-right:1.500px solid #cfcfcf;padding:7px 0 0 12px}.e{flex:1;background:#ebebeb;padding-top:950px}svg{display:block}`}
  html(){return `<div class="t"><svg width="11" height="7"><path d="M1 6L5.500 1L10 6" fill="none" stroke="#a5a5a5" stroke-width="2"/></svg></div><div class="e"><svg width="12" height="10"><path d="M12 0V10L7 5Z" fill="#888"/></svg></div>`}
});

define('pdf-viewer',class extends Base{
  css(){return `:host{display:flex;flex-direction:column;position:relative;width:3206px;height:1991px;overflow:hidden;background:#999}
  viewer-toolbar{flex:none}.work{flex:1;display:flex;min-height:0;margin-top:-.500px}.canvas{flex:1;padding-left:391px;overflow:hidden}`}
  html(){return `<viewer-toolbar></viewer-toolbar><div class="work"><div class="canvas"><tree-form></tree-form></div><scroll-rail></scroll-rail></div>
  <ink-layer kind="arrows"></ink-layer>${NOTES.map(([a,b,c,d,t,p])=>`<review-note ${p?`top="${p}"`:''} style="left:${a}px;top:${b}px;width:${c-a}px;height:${d-b}px" t="${t.replace(/"/g,'&quot;')}"></review-note>`).join('')}<ink-layer kind="pen"></ink-layer>`}
});
</script>
</body>
</html>
